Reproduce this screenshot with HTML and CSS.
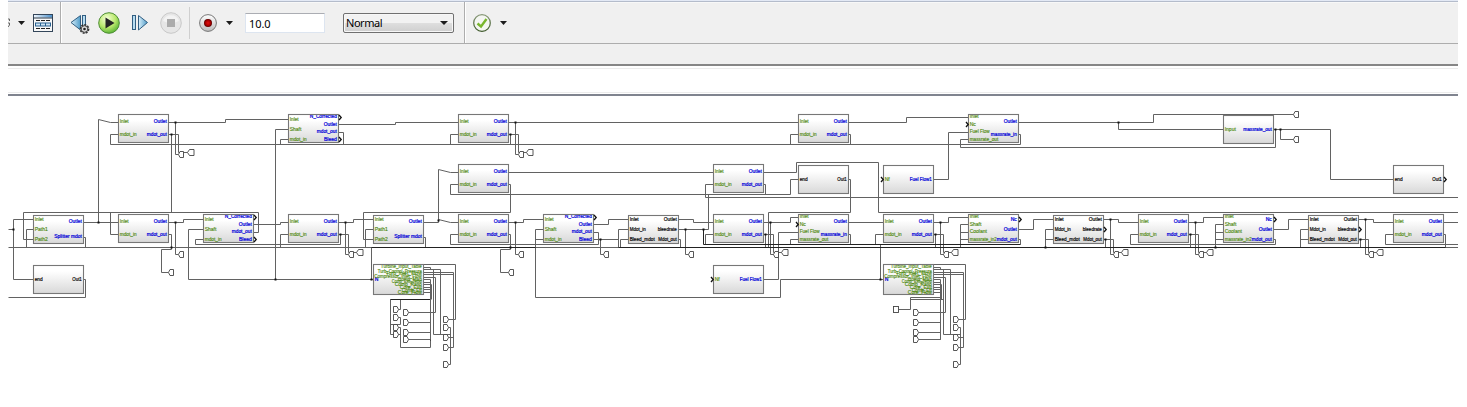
FILE: index.html
```html
<!DOCTYPE html>
<html lang="en">
<head>
<meta charset="utf-8">
<title>Model editor</title>
<link rel="stylesheet" href="styles.css">
</head>
<body>
<div class="window">
  <div class="toolbar">
    <svg class="cut" width="3" height="12" viewBox="0 0 3 12"><path d="M0 2H1.500V4M0 6H1.500V8L0 10" fill="none" stroke="#666"/></svg>
    <svg class="caret caret-first" width="7" height="4"><path d="M0 0H7L3.500 4Z"/></svg>
    <svg class="explorer" width="21" height="19" viewBox="0 0 21 19">
      <defs><linearGradient id="bar"><stop stop-color="#eef6fd"/><stop offset="1" stop-color="#4b8fc9"/></linearGradient></defs>
      <rect x=".5" y=".5" width="19" height="17" fill="#f8f8f8" stroke="#34465a"/>
      <rect x="1" y="1" width="18" height="2.500" fill="url(#bar)"/><path d="M0 4H20" stroke="#29384a"/>
      <path d="M3 6.500H18M3 14.500H18" stroke="#222" stroke-width="1.200" stroke-dasharray="4 1"/>
      <rect x="2.500" y="9" width="15" height="3" fill="#cfe6f7" stroke="#28618f"/><path d="M7.500 9V12M12.500 9V12" stroke="#28618f"/>
    </svg>
    <i class="rule rule-a"></i>
    <svg class="back" width="21" height="21" viewBox="0 0 21 21">
      <defs><linearGradient id="blue"><stop stop-color="#d9effa"/><stop offset="1" stop-color="#4f9cc9"/></linearGradient></defs>
      <path d="M10.500 1.500V16L1 8.500Z" fill="url(#blue)" stroke="#315e82"/><rect x="12.500" y="1.500" width="3" height="14" fill="#b8ddf1" stroke="#315e82"/>
      <circle cx="14.500" cy="15" r="4.100" fill="#ddd" stroke="#333" stroke-width="1.600" stroke-dasharray="2 1.100"/><circle cx="14.500" cy="15" r="3.300" fill="#ddd" stroke="#444"/><circle cx="14.500" cy="15" r="1.300" fill="#222"/>
    </svg>
    <svg class="play" width="23" height="23" viewBox="0 0 23 23">
      <defs><radialGradient id="green" cx=".4" cy=".3" r=".75"><stop stop-color="#f6ffd9"/><stop offset=".55" stop-color="#b9e86d"/><stop offset="1" stop-color="#4fae2f"/></radialGradient></defs>
      <circle cx="11" cy="11" r="10.300" fill="url(#green)" stroke="#4f8f36"/><path d="M7.500 5.500L16.500 11L7.500 16.500Z" fill="#252525"/>
    </svg>
    <svg class="step" width="17" height="18" viewBox="0 0 17 18"><rect x=".5" y="1.500" width="3" height="14" fill="#b8ddf1" stroke="#315e82"/><path d="M6.500 1.500V16L15.500 8.500Z" fill="url(#blue)" stroke="#315e82"/></svg>
    <svg class="stop" width="23" height="23" viewBox="0 0 23 23"><circle cx="11" cy="11" r="10.300" fill="#e6e6e6" stroke="#c9c9c9"/><path d="M3 9A8.500 8.500 0 0 1 19 9Q11 13 3 9" fill="#f3f3f3"/><rect x="7" y="7" width="8" height="8" fill="#ababab"/></svg>
    <i class="rule rule-b"></i>
    <svg class="record" width="19" height="19" viewBox="0 0 19 19">
      <defs><linearGradient id="silver" x2="0" y2="1"><stop stop-color="#fff"/><stop offset="1" stop-color="#bcbcbc"/></linearGradient><radialGradient id="red"><stop stop-color="#e01010"/><stop offset=".6" stop-color="#b00000"/><stop offset="1" stop-color="#580000"/></radialGradient></defs>
      <circle cx="9" cy="9" r="8.400" fill="url(#silver)" stroke="#777"/><circle cx="9" cy="9" r="4" fill="url(#red)"/>
    </svg>
    <svg class="caret caret-record" width="7" height="4"><path d="M0 0H7L3.500 4Z"/></svg>
    <div class="field">10.0</div>
    <div class="select"><span>Normal</span><svg class="caret" width="8" height="4"><path d="M0 0H8L4 4Z"/></svg></div>
    <i class="rule rule-c"></i>
    <svg class="check" width="19" height="19" viewBox="0 0 19 19"><defs><linearGradient id="ring" x2="0" y2="1"><stop stop-color="#8a9a7a"/><stop offset="1" stop-color="#3f5a2c"/></linearGradient></defs><circle cx="9" cy="9" r="8.300" fill="#f4f6f1" stroke="url(#ring)" stroke-width="1.300"/><path d="M4.500 9.500L8 12.500L13.500 5" fill="none" stroke="#78b62c" stroke-width="2.400"/></svg>
    <svg class="caret caret-check" width="7" height="4"><path d="M0 0H7L3.500 4Z"/></svg>
  </div>
  <div class="tabs"></div>
  <div class="path"></div>
  <svg class="canvas" id="canvas" width="1450" height="311" viewBox="8 96 1450 311">
    <defs><linearGradient id="face" x2="0" y2="1"><stop offset=".2" stop-color="#fff"/><stop offset="1" stop-color="#d8d8d8"/></linearGradient></defs>
  </svg>
</div>
<script src="diagram.js"></script>
</body>
</html>
```
FILE: styles.css
```css
body { margin: 0; background: #fff; overflow: hidden; }
.window { width: 1450px; height: 407px; margin-left: 8px; display: flex; flex-direction: column; }
.toolbar { box-sizing: border-box; height: 44px; flex: none; display: flex; align-items: flex-start; background: #f0f0f0; border-top: 1px solid #e3e9f5; border-bottom: 1px solid #adadad; box-shadow: inset 0 1px #b4bccb, inset 0 2px #f8f8f8; }
.toolbar > * { flex: none; }
.caret { fill: #1c1c1c; display: block; }
.cut { margin-top: 16px; }
.caret-first { margin: 20px 0 0 7px; }
.explorer { margin: 13px 0 0 8px; }
.rule { width: 1px; height: 41px; margin-top: 1px; background: #adadad; box-shadow: 1px 0 #fff; }
.rule-a { margin-left: 6px; }
.back { margin: 13px 0 0 9px; }
.play { margin: 11px 0 0 7px; }
.step { margin: 13px 0 0 11px; }
.stop { margin: 11px 0 0 11px; }
.rule-b { margin: 6px 0 0 6px; height: 32px; background: #cfcfcf; box-shadow: none; }
.record { margin: 13px 0 0 9px; }
.caret-record { margin: 20px 0 0 8px; }
.field, .select { box-sizing: border-box; height: 20px; margin-top: 12px; font: 11px/18px "Noto Sans", sans-serif; letter-spacing: -.45px; color: #000; }
.field { width: 80px; margin-left: 12px; padding-left: 3px; line-height: 20px; letter-spacing: -.1px; background: #fff; border: 1px solid #dde5f0; border-top-color: #abadb3; }
.select { width: 111px; margin-left: 18px; padding: 0 5px 0 2px; display: flex; align-items: center; justify-content: space-between; border: 1px solid #707070; border-radius: 2px; background: linear-gradient(#f2f2f2 0 48%, #dedede 52%, #cfcfcf); box-shadow: inset 0 0 0 1px #f7f7f7; }
.rule-c { margin-left: 10px; }
.check { margin: 13px 0 0 8px; }
.caret-check { margin: 20px 0 0 8px; }
.tabs { height: 22px; flex: none; box-sizing: border-box; background: #f0f0f0; border-bottom: 2px solid #868686; }
.path { height: 30px; flex: none; box-sizing: border-box; background: #fff; border-bottom: 2px solid #80848f; box-shadow: inset 0 2px #fff, inset 0 3px #ececec, inset 0 -1px #fff, inset 0 -2px #ececec; }
.canvas { display: block; flex: none; }
.wire { fill: none; stroke: #626262; }
.bus { stroke: #222; }
.block { fill: url(#face); stroke: #777; stroke-width: 1.1; }
.dot { fill: #111; }
.sink { fill: #fff; stroke: #444; stroke-width: .9; }
.arrow { fill: none; stroke: #111; stroke-width: 1.3; }
.label { font: 5px "Liberation Sans", Arial, sans-serif; stroke-width: .15; }
.right { text-anchor: end; }
.green { fill: #4f8a10; stroke: #4f8a10; }
.blue { fill: #0000d8; stroke: #0000d8; stroke-width: .22; }
.black { fill: #000; stroke: #000; stroke-width: .18; }
```
FILE: diagram.js
```javascript
const NS = "http://www.w3.org/2000/svg";
const canvas = document.getElementById("canvas");
const layer = document.createElementNS(NS, "g");
layer.setAttribute("transform", "translate(.5 .5)");
canvas.appendChild(layer);

function add(tag, attrs, text, parent = layer) {
  const el = document.createElementNS(NS, tag);
  for (const key in attrs) el.setAttribute(key, attrs[key]);
  if (text) el.textContent = text;
  parent.appendChild(el);
  return el;
}

// Port labels per block kind: [label, vertical centre, colour]
const kinds = {
  duct: { h: 28, left: [["Inlet", 7], ["mdot_in", 20]], right: [["Outlet", 7], ["mdot_out", 20]] },
  comp: { h: 28, left: [["Inlet", 5], ["Shaft", 15], ["mdot_in", 25]], right: [["N_Corrected", 2], ["Outlet", 10], ["mdot_out", 17.5], ["Bleed", 25]] },
  split: { h: 28, left: [["Inlet", 4], ["Path1", 14], ["Path2", 24]], right: [["Outlet", 6], ["Splitter mdot", 21]] },
  bleed: { h: 28, ink: "black", left: [["Inlet", 4], ["Mdot_in", 14], ["Bleed_mdot", 24]], right: [["Outlet", 4], ["bleedrate", 14], ["Mdot_out", 24]] },
  burner: { h: 28, left: [["Inlet", 2], ["Nc", 10], ["Fuel Flow", 17], ["massrate_out", 25]], right: [["Outlet", 7], ["massrate_in", 20]] },
  turbine: { h: 28, left: [["Inlet", 2], ["Shaft", 10], ["Coolant", 17], ["massrate_in2", 25]], right: [["Nc", 5], ["Outlet", 15], ["mdot_out", 25]] },
  nozzle: { h: 28, left: [["Input", 14]], right: [["massrate_out", 14]] },
  end: { h: 28, ink: "black", left: [["end", 14]], right: [["Out1", 14]] },
  fuel: { h: 28, left: [["Nf", 14]], right: [["Fuel Flow1", 14]] },
  shaft: { h: 30, swap: true, left: [["N", 15]], right: [["Turbine_Input_Table", 2], ["Turb_Control_Pressure", 7], ["Turb_Inlet_Flow", 9], ["Compressor_Inlet_Flow", 12], ["Comp_Map", 15], ["Comb_Exit_Temp", 17], ["Comp_Ratio", 20], ["Core_Exit", 23], ["Comb_Eff", 26], ["Core_Flow", 28]] }
};

// Fitted label widths
const widths = {
  "Inlet": 9, "Outlet": 13, "mdot_in": 17, "mdot_out": 20, "Bleed_mdot": 25, "Mdot_out": 18.5, "Mdot_in": 16, "bleedrate": 19,
  "N_Corrected": 27, "Fuel Flow1": 22, "Fuel Flow": 20, "massrate_out": 28.5, "massrate_in": 26, "massrate_in2": 27, "Splitter mdot": 27.5,
  "Out1": 9.5, "end": 8, "Turbine_Input_Table": 41, "Turb_Control_Pressure": 44, "Turb_Inlet_Flow": 36, "Compressor_Inlet_Flow": 47.5,
  "Comb_Exit_Temp": 30, "Comp_Map": 24, "Comp_Ratio": 27, "Core_Exit": 22, "Comb_Eff": 20, "Core_Flow": 24
};

const blocks = [
  ["duct", 118, 114], ["comp", 288, 114], ["duct", 458, 114], ["duct", 798, 114], ["burner", 968, 114], ["nozzle", 1223, 115],
  ["duct", 458, 164], ["duct", 713, 164], ["end", 798, 165], ["fuel", 883, 165], ["end", 1393, 165],
  ["split", 33, 215], ["duct", 118, 214], ["comp", 203, 214], ["duct", 288, 214], ["split", 373, 215], ["duct", 458, 214],
  ["comp", 543, 214], ["bleed", 628, 215], ["duct", 713, 214], ["burner", 798, 214], ["duct", 883, 214], ["turbine", 968, 214],
  ["bleed", 1053, 215], ["duct", 1138, 214], ["turbine", 1223, 214], ["bleed", 1308, 215], ["duct", 1393, 214],
  ["end", 33, 265], ["shaft", 373, 264], ["fuel", 713, 265], ["shaft", 883, 264]
];

const wires = `
98,222 98,119 110,122 118,122
168,122 225,122 225,119 288,119
175,122 175,154 178,154
168,134 178,134 178,152 187,152
171,134 171,212 23,212 23,239 33,239
118,134 110,134 110,144 343,144 343,132 338,132
288,139 280,139 280,144 510,144 510,134
458,134 450,134 450,144 850,144 850,134 848,134
798,134 790,134 790,144 1020,144 1020,134 1018,134
968,139 960,139 960,147 1275,147 1275,129
338,124 395,124 395,122 458,122
288,129 275,129 275,279
508,122 798,122
515,122 515,154 518,154
508,134 518,134 518,152 526,152
848,122 906,122 906,117 968,117
968,132 948,132 948,179 933,179
1018,122 1153,122 1153,114 1293,114
1118,122 1118,129 1223,129
1273,129 1330,129 1330,179 1393,179
1280,129 1280,139 1293,139
423,222 438,222 438,169 450,172 458,172
438,219 450,222 458,222
508,172 713,172
458,184 450,184 450,194 790,194 790,179 798,179
765,194 765,184 763,184
508,184 510,184 510,212 363,212 363,239 373,239
713,184 705,184 705,197 1458,197
678,229 708,229 708,194
763,172 796,172 796,162 878,162 878,212 1458,212
848,179 850,179 850,212 768,212 768,247
8,229 13,229
33,219 13,219 13,279 33,279
33,229 26,229 26,247
83,237 85,237 85,247
8,247 1458,247
168,234 171,234 171,249 161,249 161,272 168,272
83,222 118,222
118,234 110,234 110,212 258,212 258,232 253,232
168,222 183,222 183,219 203,219
175,222 175,254 178,254
203,229 188,229 188,279 373,279
203,239 195,239 195,244 340,244 340,234
253,224 280,224 280,222 288,222
288,234 280,234 280,247
338,222 353,222 353,219 373,219
345,222 345,254 348,254
338,234 348,234 348,252 356,252
373,229 365,229 365,247
423,237 425,237 425,247
371,247 371,279
458,234 450,234 450,244 598,244 598,232 593,232
508,234 510,234 510,249 500,249 500,272 508,272
508,222 523,222 523,219 543,219
515,222 515,254 518,254
543,229 535,229 535,247
543,239 535,239 535,297 780,297 780,279 883,279
593,224 608,224 608,219 628,219
593,239 618,239
628,229 618,229 618,247
600,239 600,254 604,254
628,239 620,239 620,247
678,219 693,219 693,222 713,222
685,229 685,254 689,254
678,239 680,239 680,247
713,234 705,234 705,244
763,222 790,222 790,217 798,217
770,222 770,254 774,254
763,234 773,234 773,252 781,252
765,234 765,247
798,232 778,232 778,279 763,279
798,239 790,239 790,244
848,234 850,234 850,244
848,222 883,222
883,234 875,234 875,244
1018,239 1020,239 1020,244
880,244 880,279
933,222 948,222 948,217 968,217
940,222 940,254 944,254
933,234 943,234 943,252 951,252
935,234 935,247
968,224 960,224 960,247
968,232 960,232
968,239 960,239
1018,229 1033,229 1033,219 1053,219
1053,229 1045,229 1045,247
1053,239 1045,239
1103,219 1118,219 1118,222 1138,222
1110,219 1110,254 1114,254
1103,239 1113,239 1113,252 1121,252
1105,239 1105,247
1138,234 1130,234 1130,244 1275,244 1275,239 1273,239
1188,222 1203,222 1203,217 1223,217
1195,222 1195,254 1199,254
1188,234 1198,234 1198,252 1206,252
1190,234 1190,247
1223,224 1215,224 1215,247
1223,232 1215,232
1223,239 1215,239
1273,229 1288,229 1288,219 1308,219
1308,229 1300,229 1300,247
1308,239 1300,239
1358,219 1373,219 1373,222 1393,222
1365,219 1365,254 1369,254
1358,239 1368,239 1368,252 1376,252
1360,239 1360,247
1393,234 1385,234 1385,244 1458,244
1443,234 1445,234 1445,247
1443,222 1458,222
83,279 85,279 85,297 8,297
430,347 400,347 400,327 398,327
430,299 390,299 390,334 400,334
390,324 400,324 400,317 398,317
400,299 400,309 398,309
430,339 430,347
898,309 910,309 910,297 940,297
910,299 943,299`.trim().split("\n");

const buses = ["703,229 703,244 1020,244", "371,247 535,247", "618,247 1445,247", "390,299 430,299", "430,284 430,340", "940,284 940,339"];

// Output fan shared by both shaft blocks, relative to the block's left edge
const fan = [
  [[50,264],[82,264],[82,319],[75,319]],
  [[50,267],[57,267],[57,269],[67,269],[67,334],[77,334]],
  [[50,269],[60,269],[60,334],[77,334]],
  [[50,272],[80,272],[80,347],[75,347]],
  [[50,274],[80,274],[80,337],[75,337]],
  [[50,277],[62,277],[62,312],[35,312]],
  [[50,279],[57,279],[57,339],[35,339]],
  [[50,282],[57,282],[57,332],[35,332]],
  [[50,284],[58,284],[58,299]],
  [[50,287],[57,287],[57,322],[35,322]],
  [[50,289],[58,289]],
  [[50,292],[57,292]],
  [[75,327],[77,327],[77,364],[75,364]]
];

for (const w of wires) add("polyline", { class: "wire", points: w });
for (const w of buses) add("polyline", { class: "wire bus", points: w });
for (const x of [373, 883])
  for (const line of fan) add("polyline", { class: "wire", points: line.map(p => `${p[0] + x},${p[1]}`).join(" ") });

blocks.forEach(([kind, x, y], i) => {
  const k = kinds[kind];
  const clip = add("clipPath", { id: "clip" + i });
  add("rect", { x, y: y + .4, width: 50, height: k.h + 1 }, "", clip);
  add("rect", { class: "block", x, y, width: 50, height: k.h });
  const g = add("g", { "clip-path": `url(#clip${i})` });
  const leftInk = k.ink || (k.swap ? "blue" : "green");
  const rightInk = k.ink || (k.swap ? "green" : "blue");
  const label = (t, attrs) => {
    if (widths[t]) Object.assign(attrs, { textLength: widths[t], lengthAdjust: "spacingAndGlyphs" });
    add("text", attrs, t, g);
  };
  for (const [t, dy] of k.left) label(t, { class: "label " + leftInk, x: x + 1.2, y: y + dy + 1.4 });
  for (const [t, dy] of k.right) label(t, { class: "label right " + rightInk, x: x + 48.3, y: y + dy + 1.4 });
});

const dots = [[175,122],[171,134],[515,122],[510,134],[1118,122],[1275,129],[1280,129],[13,229],[98,222],[175,222],[171,247],[275,279],[345,222],[340,234],[371,279],[438,220],[515,222],[510,247],[600,239],[685,229],[703,229],[770,222],[765,234],[880,279],[940,222],[935,234],[1045,247],[1110,219],[1105,239],[1195,222],[1190,234],[1215,247],[1365,219],[1360,239]];
for (const [x, y] of dots) add("rect", { class: "dot", x: x - 1, y: y - 1, width: 2, height: 2 });

// Sinks whose input is on the left
const small = [[178,154],[518,154],[1293,114],[1293,139],[178,254],[168,272],[348,254],[508,272],[518,254],[603,254],[688,254],[773,254],[943,254],[1113,254],[1198,254],[1368,254]];
for (const [x, y] of small) add("path", { class: "sink", d: `M${x + 5} ${y - 3}h-3.500l-1.500 3 1.500 3h3.500z` });
const wide = [[187,152],[526,152],[356,252],[781,252],[951,252],[1121,252],[1206,252],[1376,252]];
for (const [x, y] of wide) add("path", { class: "sink", d: `M${x + 6.500} ${y - 3}h-4.500l-2 3 2 3h4.500z` });

// Sinks whose input is on the right
const flipped = [[393,309],[393,317],[393,327],[393,334]];
for (const x of [403, 913]) for (const y of [312, 322, 332, 339]) flipped.push([x, y]);
for (const x of [443, 953]) for (const y of [319, 327, 337, 347, 364]) flipped.push([x, y]);
for (const [x, y] of flipped) add("path", { class: "sink", d: `M${x} ${y - 3}h3.500l1.500 3-1.500 3h-3.500z` });
add("rect", { class: "sink", x: 893, y: 306, width: 5, height: 6 });

const arrows = [[339,117],[339,139],[966,124],[881,179],[1444,179],[254,217],[254,239],[594,217],[796,224],[1019,219],[1104,229],[1274,219],[1359,229],[711,279]];
for (const [x, y] of arrows) add("path", { class: "arrow", d: `M${x - .5} ${y - 2.500}l2.200 2.500-2.200 2.500` });
```
